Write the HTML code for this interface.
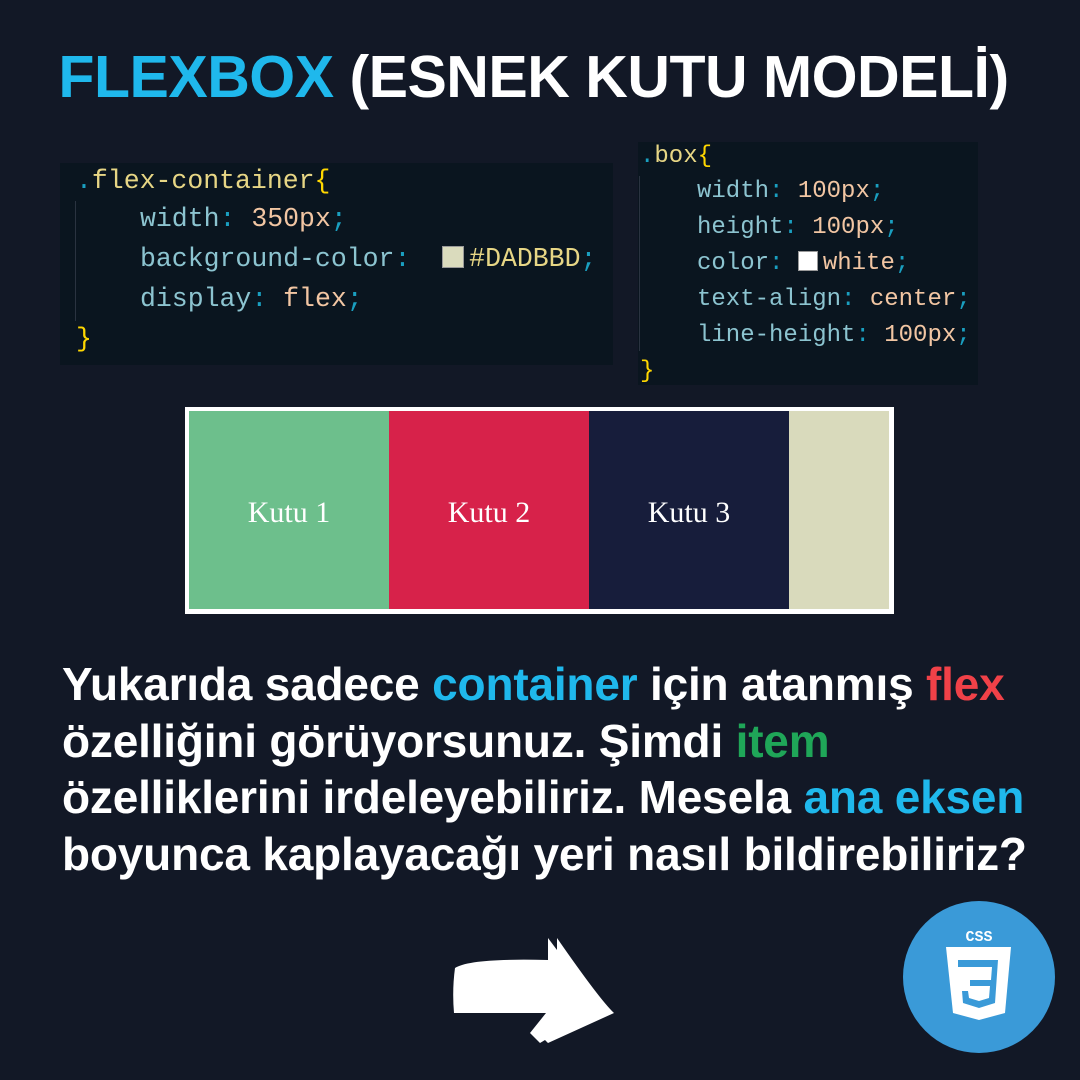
<!DOCTYPE html>
<html><head><meta charset="utf-8"><style>
*{margin:0;padding:0;box-sizing:border-box}
body{width:1080px;height:1080px;background:#121826;position:relative;overflow:hidden;font-family:"Liberation Sans",sans-serif}
.t{position:absolute;left:0;width:1067px;top:43px;text-align:center;font-weight:bold;font-size:59px;color:#fff;letter-spacing:-0.5px}
.code{position:absolute;background:#0a151f;font-family:"Liberation Mono",monospace;color:#8cc4d0;white-space:pre}
.code div{position:absolute;left:0}
.y{color:#e7d685}.b{color:#ffd700}.n{color:#f2c6a3}.d{color:#1a9fc0}
.sw{display:inline-block;width:22px;height:22px;vertical-align:-2px;border:1px solid #999;margin-right:5px}
.guide{position:absolute;width:1px;background:#2a3340}
.box{position:absolute;top:411px;height:198px;color:#fff;font-family:"Liberation Serif",serif;font-size:30px;text-align:center;line-height:204px}
.p{position:absolute;left:62px;top:656px;font-weight:bold;font-size:46px;line-height:56.5px;color:#fff;letter-spacing:-0.2px;white-space:nowrap}
</style></head><body>
<div class="t"><span style="color:#1fb8ec">FLEXBOX</span> (ESNEK KUTU MODELİ)</div>

<div class="code" style="left:60px;top:163px;width:553px;height:202px;font-size:26.5px">
<div style="top:3px;left:16px"><span class="d">.</span><span class="y">flex-container</span><span class="b">{</span></div>
<div style="top:41px;left:80px">width<span class="d">:</span> <span class="n">350px</span><span class="d">;</span></div>
<div style="top:81px;left:80px">background-color<span class="d">:</span>  <span class="sw" style="background:#dadbbd"></span><span class="y">#DADBBD</span><span class="d">;</span></div>
<div style="top:121px;left:80px">display<span class="d">:</span> <span class="n">flex</span><span class="d">;</span></div>
<div style="top:161px;left:16px"><span class="b">}</span></div>
<span class="guide" style="left:15px;top:38px;height:120px"></span>
</div>

<div class="code" style="left:638px;top:142px;width:340px;height:243px;font-size:24px">
<div style="top:1px;left:2px"><span class="d">.</span><span class="y">box</span><span class="b">{</span></div>
<div style="top:36px;left:59px">width<span class="d">:</span> <span class="n">100px</span><span class="d">;</span></div>
<div style="top:72px;left:59px">height<span class="d">:</span> <span class="n">100px</span><span class="d">;</span></div>
<div style="top:108px;left:59px">color<span class="d">:</span> <span class="sw" style="background:#fff;width:20px;height:20px"></span><span class="n">white</span><span class="d">;</span></div>
<div style="top:144px;left:59px">text-align<span class="d">:</span> <span class="n">center</span><span class="d">;</span></div>
<div style="top:180px;left:59px">line-height<span class="d">:</span> <span class="n">100px</span><span class="d">;</span></div>
<div style="top:216px;left:2px"><span class="b">}</span></div>
<span class="guide" style="left:1px;top:34px;height:175px"></span>
</div>

<div style="position:absolute;left:185px;top:407px;width:709px;height:207px;background:#fff"></div>
<div class="box" style="left:189px;width:200px;background:#6dbf8c">Kutu 1</div>
<div class="box" style="left:389px;width:200px;background:#d7224a">Kutu 2</div>
<div class="box" style="left:589px;width:200px;background:#171d3b">Kutu 3</div>
<div class="box" style="left:789px;width:100px;background:#d9dabc"></div>

<div class="p">Yukarıda sadece <span style="color:#1fb8ec">container</span> için atanmış <span style="color:#f04148">flex</span><br>özelliğini görüyorsunuz. Şimdi <span style="color:#1fa658">item</span><br>özelliklerini irdeleyebiliriz. Mesela <span style="color:#1fb8ec">ana eksen</span><br>boyunca kaplayacağı yeri nasıl bildirebiliriz?</div>

<svg style="position:absolute;left:0;top:0" width="1080" height="1080">
<path d="M455 968 Q470 958 548 960 L548 938 L557 950 L557 938 Q600 1000 614 1013 L548 1043 L545 1040 L540 1043 L530 1033 L546 1013 L454 1013 Q452 990 455 968 Z" fill="#fff"/>
<circle cx="979" cy="977" r="76" fill="#3a9ad8"/>
<path d="M946 947 L1011 947 L1005 1013 L979 1020 L953 1013 Z" fill="#fff"/>
<path d="M958 960 L998 960 L995 1003 L979 1008 L963 1003 L962 991 L968 991 L969 998 L979 1001 L989 998 L990 986 L970 986 L970 980 L991 980 L992 967 L958 967 Z" fill="#3a9ad8"/>
<text x="979" y="941" text-anchor="middle" font-family="Liberation Mono" font-weight="bold" font-size="15" fill="#fff">CSS</text>
</svg>
</body></html>
